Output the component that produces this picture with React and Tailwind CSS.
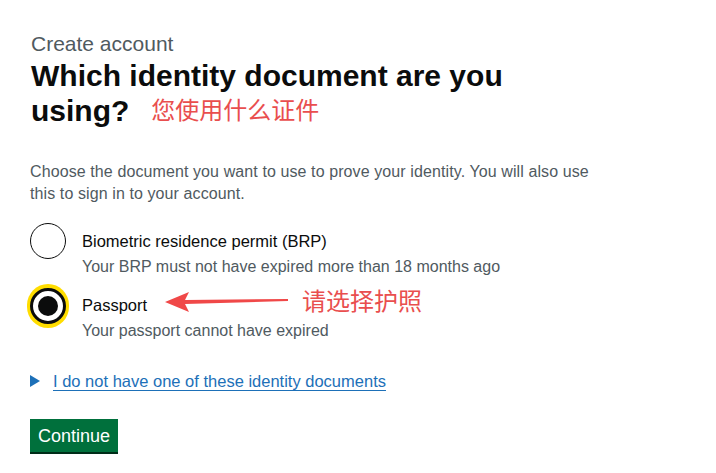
const font = { fontFamily: '"Liberation Sans", Arial, "Noto Sans CJK SC", sans-serif' };

function Radio({ checked, label, hint }) {
  return (
    <div className="flex items-start">
      <div className="relative w-[52px] h-[36px] shrink-0">
        {checked ? (
          <div className="absolute left-[-3px] top-[-3px] w-[42px] h-[44px] rounded-full bg-[#ffdd00] flex items-center justify-center">
            <div className="w-[36px] h-[36px] rounded-full border-[3px] border-[#0b0c0c] bg-white flex items-center justify-center">
              <div className="w-[20px] h-[20px] rounded-full bg-[#0b0c0c]" />
            </div>
          </div>
        ) : (
          <div className="w-[36px] h-[36px] rounded-full border-[1.5px] border-[#0b0c0c] bg-white" />
        )}
      </div>
      <div className="pt-[7px]">
        <div className="text-[16.5px] leading-[22px] text-[#0b0c0c]">{label}</div>
        <div className="mt-[4px] text-[16px] leading-[22px] text-[#505a5f]">{hint}</div>
      </div>
    </div>
  );
}

export default function App() {
  return (
    <div className="w-[716px] h-[473px] bg-white relative overflow-hidden" style={font}>
      <div className="pl-[30px] pt-[32px]">
        <div className="text-[21px] leading-[24px] text-[#505a5f] pl-[1px]">Create account</div>
        <h1 className="mt-[2px] text-[30px] leading-[35px] font-bold text-[#0b0c0c] pl-[1px]">
          Which identity document are you
          <br />
          using?
          <span className="ml-[22px] text-[24px] font-normal text-[#e94e4e] align-[2px]">您使用什么证件</span>
        </h1>
        <p className="mt-[33px] w-[585px] text-[16px] leading-[22px] tracking-[0.1px] text-[#505a5f]">
          Choose the document you want to use to prove your identity. You will also use this to sign in to your account.
        </p>
        <div className="mt-[18px] flex flex-col gap-[9px]">
          <Radio label="Biometric residence permit (BRP)" hint="Your BRP must not have expired more than 18 months ago" />
          <div className="relative">
            <Radio checked label="Passport" hint="Your passport cannot have expired" />
            <div className="absolute left-[135px] top-[2px] flex items-center">
              <svg width="125" height="22" viewBox="0 0 125 22">
                <path d="M0 11 L24 1 L20 9 L123 8 L123 10 L20 13 L24 21 Z" fill="#f04848" />
              </svg>
              <span className="ml-[12px] text-[24px] leading-[26px] text-[#e94e4e]">请选择护照</span>
            </div>
          </div>
        </div>
        <div className="mt-[28px] flex items-center">
          <svg width="10" height="12" viewBox="0 0 10 12" className="mr-[13px]">
            <path d="M0 0 L10 6 L0 12 Z" fill="#1d70b8" />
          </svg>
          <a href="#" className="text-[16.5px] leading-[22px] text-[#1d70b8] underline underline-offset-[3px]">
            I do not have one of these identity documents
          </a>
        </div>
        <button className="mt-[27px] h-[33px] px-[8px] bg-[#00703c] text-white text-[18px] leading-[22px] shadow-[0_2px_0_#002d18]">
          Continue
        </button>
      </div>
    </div>
  );
}
